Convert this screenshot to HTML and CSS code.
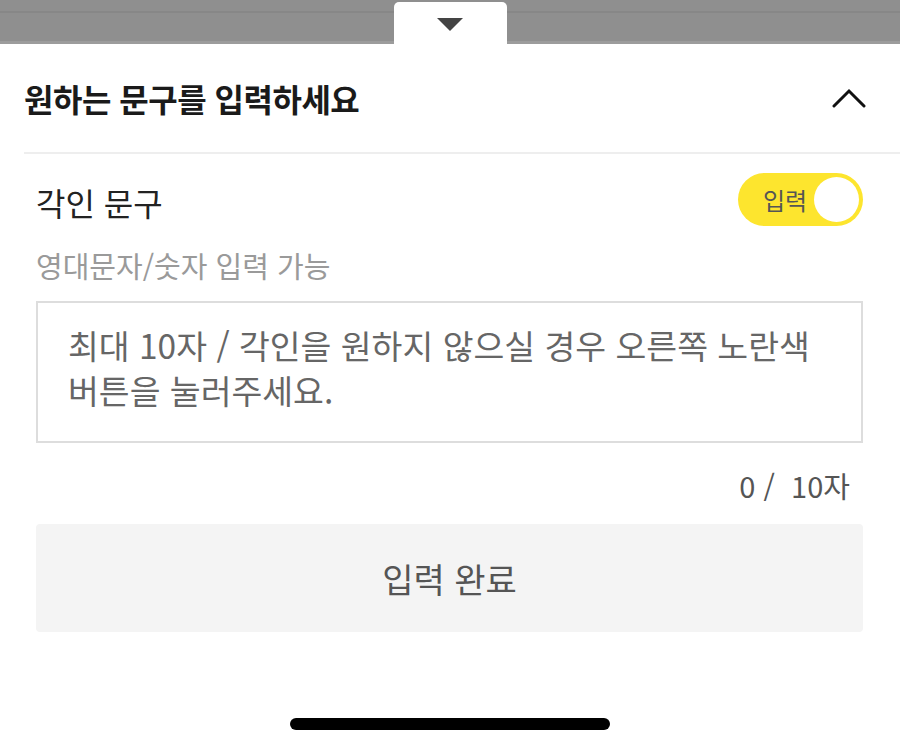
FILE: index.html
```html
<!DOCTYPE html>
<html lang="ko">
<head>
<meta charset="utf-8">
<title>각인 문구 입력</title>
<link rel="stylesheet" href="styles.css">
</head>
<body>
<div class="top-bar">
  <div class="tab">
    <svg class="tab-arrow" width="26" height="14" viewBox="0 0 26 14"><polygon points="0,0 26,0 13,13" fill="#444"/></svg>
  </div>
</div>
<section class="sheet">
  <header class="head">
    <h1 class="title">원하는 문구를 입력하세요</h1>
    <svg class="chevron" width="34" height="20" viewBox="0 0 34 20"><polyline points="2,18 17,3 32,18" fill="none" stroke="#111" stroke-width="3" stroke-linecap="round" stroke-linejoin="miter"/></svg>
  </header>
  <div class="divider"></div>
  <div class="content">
    <div class="row">
      <span class="label">각인 문구</span>
      <div class="toggle"><span class="toggle-text">입력</span><span class="knob"></span></div>
    </div>
    <p class="hint">영대문자/숫자 입력 가능</p>
    <div class="box"><p class="placeholder">최대 10자 / 각인을 원하지 않으실 경우 오른쪽 노란색 버튼을 눌러주세요.</p></div>
    <div class="count">0 /&nbsp; 10자</div>
    <button class="done" type="button">입력 완료</button>
  </div>
  <div class="home-wrap"><div class="home"></div></div>
</section>
</body>
</html>
```
FILE: styles.css
```css
* { box-sizing: border-box; }
html, body { margin: 0; padding: 0; background: #fff; }
body {
  width: 900px;
  height: 750px;
  overflow: hidden;
  font-family: "Noto Sans CJK KR", "Noto Sans", sans-serif;
  color: #222;
}
.top-bar {
  height: 44px;
  background: linear-gradient(#8f8f8f 0, #8f8f8f 11px, #878787 11px, #878787 13px, #8f8f8f 13px, #8f8f8f 41px, #9c9c9c 41px);
  display: flex;
  justify-content: center;
  align-items: flex-end;
}
.tab {
  width: 113px;
  height: 42px;
  background: #fff;
  border-radius: 5px 5px 0 0;
  display: flex;
  justify-content: center;
  padding-top: 16px;
}
.tab-arrow { display: block; }
.sheet { padding-left: 24px; }
.head {
  height: 108px;
  display: flex;
  align-items: center;
  justify-content: space-between;
  padding-right: 34px;
}
.title {
  margin: 0;
  font-size: 32px;
  font-weight: 700;
  letter-spacing: -0.5px;
  color: #1a1a1a;
  line-height: 108px;
}
.chevron { display: block; }
.divider { height: 2px; background: #eeeeee; }
.content { padding: 0 37px 0 12px; }
.row {
  margin-top: 19px;
  height: 53px;
  display: flex;
  align-items: center;
  justify-content: space-between;
}
.label {
  font-size: 32px;
  line-height: 40px;
  padding-top: 5px;
  color: #222;
}
.toggle {
  width: 125px;
  height: 53px;
  border-radius: 27px;
  background: #fde52e;
  display: flex;
  align-items: center;
  justify-content: space-between;
  padding: 0 4px 0 25px;
}
.toggle-text { font-size: 24px; color: #555; line-height: 30px; }
.knob {
  width: 45px;
  height: 45px;
  border-radius: 50%;
  background: #fff;
}
.hint {
  margin: 23px 0 0;
  font-size: 29px;
  line-height: 32px;
  color: #9a9a9a;
}
.box {
  margin-top: 20px;
  height: 142px;
  border: 2px solid #dddddd;
  padding: 19px 20px 0 30px;
}
.placeholder {
  margin: 0;
  font-size: 33.5px;
  line-height: 45px;
  color: #666;
  word-break: keep-all;
}
.count {
  margin-top: 22px;
  height: 40px;
  line-height: 40px;
  text-align: right;
  padding-right: 13px;
  font-size: 29px;
  color: #555;
}
.done {
  display: block;
  margin-top: 19px;
  width: 100%;
  height: 108px;
  border: none;
  border-radius: 4px;
  background: #f4f4f4;
  font-family: inherit;
  font-size: 34px;
  color: #555;
  padding: 0;
}
.home-wrap {
  margin-top: 86px;
  display: flex;
  justify-content: center;
  padding-right: 24px;
}
.home {
  width: 320px;
  height: 12px;
  border-radius: 6px;
  background: #000;
}
```
